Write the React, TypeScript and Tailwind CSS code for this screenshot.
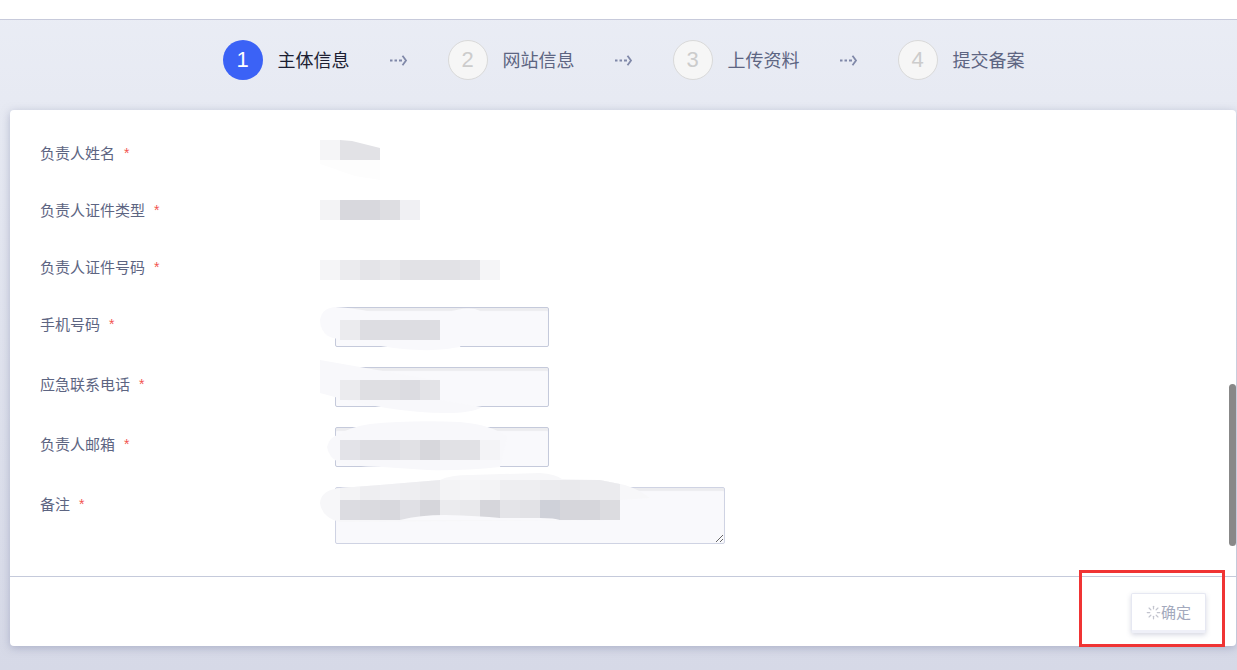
import { Loader } from "lucide-react";

const steps = [
  { n: "1", label: "主体信息", active: true },
  { n: "2", label: "网站信息", active: false },
  { n: "3", label: "上传资料", active: false },
  { n: "4", label: "提交备案", active: false },
];

const rows = [
  { label: "负责人姓名", kind: "text" },
  { label: "负责人证件类型", kind: "text" },
  { label: "负责人证件号码", kind: "text" },
  { label: "手机号码", kind: "input" },
  { label: "应急联系电话", kind: "input" },
  { label: "负责人邮箱", kind: "input" },
  { label: "备注", kind: "area" },
];

const mosaics: [number, number, string[]][] = [
  [320, 140, ["#f5f5f7", "#e2e2e6", "#e2e2e6"]],
  [320, 200, ["#f3f3f5", "#d8d8dd", "#d8d8dd", "#dedee2", "#f0f0f3"]],
  [320, 260, ["#f5f5f7", "#ebebee", "#e4e4e8", "#e8e8eb", "#e2e2e6", "#e2e2e6", "#e2e2e6", "#e4e4e8", "#f5f5f7"]],
  [340, 320, ["#ebebee", "#dddde2", "#dddde2", "#dddde2", "#dddde2"]],
  [340, 380, ["#ebebee", "#dfdfe3", "#dfdfe3", "#dcdce1", "#e3e3e7"]],
  [340, 440, ["#e3e3e8", "#dddde2", "#dddde2", "#e1e1e5", "#d7d7dc", "#e1e1e5", "#e1e1e5", "#f3f3f6"]],
  [340, 500, ["#dcdce1", "#dadadf", "#d8d8dd", "#e0e0e5", "#d6d6db", "#ebebee", "#e9e9ec", "#d6d6db", "#e4e4e8", "#e2e2e6", "#cfd1d9", "#d6d6db", "#d6d6db", "#dcdce0"]],
];

const upperRow = ["#f3f3f5", "#eeeef1", "#f0f0f3", "#eeeef1", "#ebebee", "#f3f3f5", "#f5f5f7", "#f3f3f5", "#eeeef1", "#eeeef1", "#ebebee", "#e9e9ec", "#ebebee", "#ebebee"];

const blobFour =
  "M320 503Q321 490 340 488L380 485L440 480Q450 475 470 475L540 473Q555 474 562 479L600 480L625 485Q640 490 650 498L620 500L620 520L340 522Q322 518 320 503z";

function Arrow() {
  return (
    <svg width="18" height="12" viewBox="0 0 18 12" fill="none" stroke="#7f88a8" strokeWidth="1.8" className="block">
      <path d="M0 6.500h2.500M4.500 6.500h2.500M9 6.500h3" />
      <path d="M12.500 1.800 16 6.500l-3.500 4.700" />
    </svg>
  );
}

function Redaction() {
  return (
    <svg width="1237" height="670" viewBox="0 0 1237 670" className="pointer-events-none absolute left-0 top-0">
      <defs>
        <clipPath id="blob-four">
          <path d={blobFour} />
        </clipPath>
      </defs>
      <path d="M320 160h60v20l-25-4-35-12z" fill="#fdfdfd" />
      <path d="M320 320Q322 308 335 307Q360 308 393 317Q425 320 446 313Q462 307 475 309Q485 312 490 320L470 322L460 347Q440 351 421 350Q390 349 368 343Q335 340 328 336Q320 330 320 320z" fill="#f9f9fc" />
      <path d="M320 360L440 381V400L482 407Q472 413 446 413Q390 413 320 393z" fill="#f8f8fb" />
      <path d="M327 447Q329 437 340 434Q350 427 370 424Q410 420 460 422Q493 425 507 437L500 467Q460 471 428 470L382 467Q350 466 339 463Q328 456 327 447z" fill="#f8f8fb" />
      <path d={blobFour} fill="#f7f7f9" />
      <g clipPath="url(#blob-four)">
        {upperRow.map((c, i) => (
          <rect key={i} x={340 + i * 20} y={480} width="20" height="20" fill={c} />
        ))}
      </g>
      {mosaics.map(([x, y, cols]) =>
        cols.map((c, i) => <rect key={`${y}-${i}`} x={x + i * 20} y={y} width="20" height="20" fill={c} />),
      )}
      <path d="M400 520Q420 515 445 515Q480 516 500 518L540 518Q555 518 560 520z" fill="#f9f9fc" />
      <path d="M340 139v1l12 1 28 7v-9z" fill="#ffffff" />
    </svg>
  );
}

export default function App() {
  return (
    <div
      className="relative h-[670px] w-[1237px] overflow-hidden bg-gradient-to-b from-[#eaedf5] to-[#d6d9e7]"
      style={{ fontFamily: '"Noto Sans CJK SC", "Liberation Sans", sans-serif' }}
    >
      <div className="h-5 border-b border-[#c7cadb] bg-white" />
      <div className="flex h-[90px] items-start justify-center pl-[10px] pt-5">
        {steps.map((s, i) => (
          <div key={s.n} className="flex h-10 items-center">
            <div
              className={
                s.active
                  ? "flex h-10 w-10 items-center justify-center rounded-full bg-[#3b62f6] pb-[2px] text-[22px] text-white"
                  : "flex h-10 w-10 items-center justify-center rounded-full border border-[#d9d9d9] bg-[#f6f6f6] pb-[2px] text-[22px] text-[#cccccc]"
              }
              style={{ fontFamily: '"Liberation Sans", sans-serif' }}
            >
              {s.n}
            </div>
            <span className={s.active ? "ml-[15px] w-[72px] pb-[3px] text-[18px] leading-6 text-[#1c1f33]" : "ml-[15px] w-[72px] pb-[3px] text-[18px] leading-6 text-[#5d6582]"}>
              {s.label}
            </span>
            {i < 3 && (
              <div className="mx-10 w-[18px]">
                <Arrow />
              </div>
            )}
          </div>
        ))}
      </div>

      <div className="relative ml-[10px] flex h-[536px] w-[1226px] flex-col rounded-[4px] bg-white shadow-[0_2px_8px_rgba(130,135,170,0.5)]">
        <div className="flex-1 pl-[30px] pt-[26px]">
          {rows.map((r) => (
            <div key={r.label} className={r.kind === "text" ? "flex h-[57px] items-start" : "flex h-[60px] items-start"}>
              <div className="flex h-[34px] w-[295px] items-center text-[15px] text-[#5d6582]">
                <span>{r.label}</span>
                <span className="ml-[9px] text-[14px] text-[#f2554f]" style={{ fontFamily: '"Liberation Sans", sans-serif' }}>*</span>
              </div>
              {r.kind === "input" && (
                <input readOnly className="h-10 w-[214px] rounded-[2px] border border-[#c5cadb] bg-[#f9f9fc] shadow-[inset_0_3px_1px_rgba(0,0,0,0.05)] outline-none" />
              )}
              {r.kind === "area" && (
                <textarea readOnly className="h-[57px] w-[390px] resize rounded-[2px] border border-[#cfd3e3] bg-[#f9f9fc] shadow-[inset_0_3px_1px_rgba(0,0,0,0.05)] outline-none" />
              )}
            </div>
          ))}
        </div>
        <div className="flex h-[70px] items-start justify-end border-t border-[#c5cadb] pr-[30px] pt-4">
          <button className="flex h-10 w-[75px] items-center justify-center rounded-[2px] border border-[#e6e8f2] border-b-[3px] border-b-[#eff0f8] bg-white text-[15px] text-[#a3a9bd] shadow-[0_2px_5px_rgba(120,125,160,0.3)]">
            <Loader size={15} strokeWidth={2} className="text-[#c2c4ce]" />
            <span>确定</span>
          </button>
        </div>
        <div className="absolute left-[1219px] top-[274px] h-[162px] w-[7px] rounded-full bg-[#888888]" />
      </div>

      <Redaction />
      <div className="pointer-events-none absolute left-[1079px] top-[570px] h-[77px] w-[146px] border-[3px] border-[#f03434]" />
    </div>
  );
}
